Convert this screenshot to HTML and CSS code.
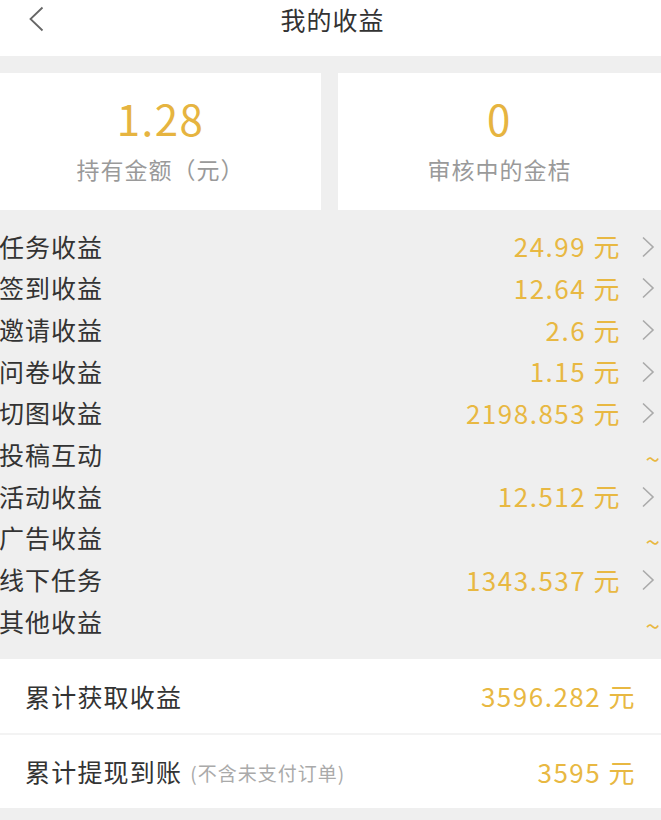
FILE: index.html
```html
<!DOCTYPE html>
<html lang="zh-CN">
<head>
<meta charset="utf-8">
<title>我的收益</title>
<link rel="stylesheet" href="styles.css">
</head>
<body>
<div class="page">
  <header class="topbar">
    <span class="back"><svg width="18" height="26" viewBox="0 0 18 26"><path d="M15.5 1.5 L3.5 13 L15.5 24.5" fill="none" stroke="#666" stroke-width="1.8"/></svg></span>
    <h1 class="title">我的收益</h1>
  </header>

  <section class="cards">
    <div class="card">
      <div class="card-num">1.28</div>
      <div class="card-label">持有金额（元）</div>
    </div>
    <div class="card">
      <div class="card-num">0</div>
      <div class="card-label">审核中的金桔</div>
    </div>
  </section>

  <section class="list">
    <div class="row"><span class="label">任务收益</span><span class="val">24.99 元</span><svg class="chev" width="14" height="22" viewBox="0 0 14 22"><path d="M2 1.5 L12 11 L2 20.5" fill="none" stroke="#aaa" stroke-width="1.6"/></svg></div>
    <div class="row"><span class="label">签到收益</span><span class="val">12.64 元</span><svg class="chev" width="14" height="22" viewBox="0 0 14 22"><path d="M2 1.5 L12 11 L2 20.5" fill="none" stroke="#aaa" stroke-width="1.6"/></svg></div>
    <div class="row"><span class="label">邀请收益</span><span class="val">2.6 元</span><svg class="chev" width="14" height="22" viewBox="0 0 14 22"><path d="M2 1.5 L12 11 L2 20.5" fill="none" stroke="#aaa" stroke-width="1.6"/></svg></div>
    <div class="row"><span class="label">问卷收益</span><span class="val">1.15 元</span><svg class="chev" width="14" height="22" viewBox="0 0 14 22"><path d="M2 1.5 L12 11 L2 20.5" fill="none" stroke="#aaa" stroke-width="1.6"/></svg></div>
    <div class="row"><span class="label">切图收益</span><span class="val">2198.853 元</span><svg class="chev" width="14" height="22" viewBox="0 0 14 22"><path d="M2 1.5 L12 11 L2 20.5" fill="none" stroke="#aaa" stroke-width="1.6"/></svg></div>
    <div class="row"><span class="label">投稿互动</span><span class="tilde">~</span></div>
    <div class="row"><span class="label">活动收益</span><span class="val">12.512 元</span><svg class="chev" width="14" height="22" viewBox="0 0 14 22"><path d="M2 1.5 L12 11 L2 20.5" fill="none" stroke="#aaa" stroke-width="1.6"/></svg></div>
    <div class="row"><span class="label">广告收益</span><span class="tilde">~</span></div>
    <div class="row"><span class="label">线下任务</span><span class="val">1343.537 元</span><svg class="chev" width="14" height="22" viewBox="0 0 14 22"><path d="M2 1.5 L12 11 L2 20.5" fill="none" stroke="#aaa" stroke-width="1.6"/></svg></div>
    <div class="row"><span class="label">其他收益</span><span class="tilde">~</span></div>
  </section>

  <section class="totals">
    <div class="trow"><span class="tlabel">累计获取收益</span><span class="tval">3596.282 元</span></div>
    <div class="trow"><span class="tlabel">累计提现到账<small class="note">(不含未支付订单)</small></span><span class="tval">3595 元</span></div>
  </section>
</div>
</body>
</html>
```

FILE: styles.css
```css
* { box-sizing: border-box; margin: 0; padding: 0; }
html, body { width: 661px; height: 820px; overflow: hidden; }
body {
  background: #efefef;
  font-family: "Noto Sans CJK SC", "Noto Sans", sans-serif;
  color: #333;
}
.page { width: 661px; }
.topbar {
  height: 56px;
  background: #fff;
  display: flex;
  justify-content: center;
  position: relative;
}
.back {
  position: absolute;
  left: 27px;
  top: 6px;
  display: flex;
}
.title {
  font-size: 25px;
  font-weight: 400;
  line-height: 38px;
  color: #333;
  letter-spacing: 1px;
  margin-left: 4px;
}
.cards {
  display: flex;
  gap: 17px;
  margin-top: 17px;
}
.card {
  background: #fff;
  height: 137px;
  display: flex;
  flex-direction: column;
  align-items: center;
}
.card:first-child { width: 321px; }
.card:last-child { width: 323px; }
.card-num {
  font-size: 42px;
  line-height: 1;
  color: #e6b440;
  margin-top: 24px;
  letter-spacing: 1.5px;
}
.card-label {
  font-size: 23px;
  color: #9a9a9a;
  margin-top: 13px;
  letter-spacing: 1px;
}
.list {
  margin-top: 16px;
  padding-bottom: 16px;
}
.row {
  height: 41.67px;
  display: flex;
  align-items: center;
}
.label {
  font-size: 25px;
  color: #333;
  letter-spacing: 1px;
  flex: 1;
  margin-left: -1px;
  margin-top: -2px;
}
.val {
  font-size: 26px;
  color: #e8b842;
  letter-spacing: 1.5px;
  margin-top: -2px;
}
.chev {
  margin-left: 20px;
  margin-right: 6px;
  display: block;
}
.tilde {
  font-size: 26px;
  line-height: 1;
  color: #e8b842;
  margin-right: 1px;
  margin-top: 6px;
}
.totals { background: #fff; }
.trow {
  height: 74px;
  display: flex;
  align-items: center;
  justify-content: space-between;
  padding: 0 25px 0 25px;
}
.trow + .trow {
  border-top: 2px solid #f3f3f3;
  height: 75px;
}
.tlabel {
  font-size: 25px;
  color: #333;
  letter-spacing: 1.2px;
  display: flex;
  align-items: center;
}
.note {
  font-size: 19px;
  color: #aaa;
  margin-left: 8px;
  letter-spacing: 1px;
  margin-top: 2px;
}
.tval {
  font-size: 26px;
  color: #e8b842;
  letter-spacing: 1.5px;
}
```
